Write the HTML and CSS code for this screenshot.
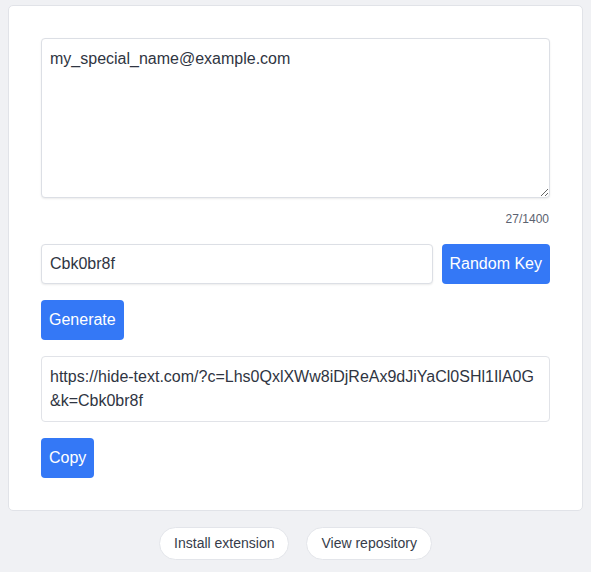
FILE: index.html
```html
<!DOCTYPE html>
<html lang="en">
<head>
<meta charset="utf-8">
<title>Hide text</title>
<link rel="stylesheet" href="styles.css">
</head>
<body>
<main class="page">
  <section class="card">
    <textarea class="message" rows="6">my_special_name@example.com</textarea>
    <div class="counter">27/1400</div>
    <div class="key-row">
      <input class="field key-input" type="text" value="Cbk0br8f">
      <button class="btn">Random Key</button>
    </div>
    <div class="actions">
      <button class="btn">Generate</button>
    </div>
    <div class="output">https://hide-text.com/?c=Lhs0QxlXWw8iDjReAx9dJiYaCl0SHl1IlA0G&amp;k=Cbk0br8f</div>
    <div class="actions">
      <button class="btn">Copy</button>
    </div>
  </section>
  <nav class="links">
    <a class="pill" href="#">Install extension</a>
    <a class="pill" href="#">View repository</a>
  </nav>
</main>
</body>
</html>
```
FILE: styles.css
```css
* { box-sizing: border-box; }
html, body {
  margin: 0;
  background: #f0f1f4;
}
body {
  font-family: "Liberation Sans", Arial, sans-serif;
  color: #2f3542;
  padding: 5px 8px 0;
}
.page {
  display: flex;
  flex-direction: column;
}
.card {
  background: #ffffff;
  border: 1px solid #e1e3e8;
  border-radius: 5px;
  padding: 32px;
  display: flex;
  flex-direction: column;
}
.message {
  display: block;
  width: 100%;
  height: 160px;
  margin: 0;
  padding: 8px;
  font-family: inherit;
  font-size: 16px;
  line-height: 24px;
  color: #2f3542;
  border: 1px solid #dcdfe5;
  border-radius: 4px;
  box-shadow: 0 1px 2px rgba(0, 0, 0, 0.08);
  resize: vertical;
  outline: none;
}
.counter {
  margin-top: 12px;
  text-align: right;
  font-size: 12px;
  line-height: 18px;
  color: #5c6270;
  padding-right: 1px;
}
.key-row {
  margin-top: 16px;
  display: flex;
  gap: 9px;
}
.field {
  flex: 1;
  min-width: 0;
  height: 40px;
  margin: 0;
  padding: 7px 8px;
  font-family: inherit;
  font-size: 16px;
  line-height: 24px;
  color: #2f3542;
  border: 1px solid #dcdfe5;
  border-radius: 4px;
  box-shadow: 0 1px 2px rgba(0, 0, 0, 0.08);
  outline: none;
}
.btn {
  height: 40px;
  padding: 0 8px;
  margin: 0;
  border: none;
  border-radius: 4px;
  background: #3478f6;
  color: #ffffff;
  font-family: inherit;
  font-size: 16px;
  line-height: 24px;
  cursor: pointer;
}
.actions {
  margin-top: 16px;
  display: flex;
}
.output {
  margin-top: 16px;
  padding: 8px;
  border: 1px solid #e1e3e8;
  border-radius: 4px;
  font-size: 16px;
  line-height: 24px;
  word-break: break-all;
  color: #2f3542;
}
.links {
  margin-top: 16px;
  display: flex;
  justify-content: center;
  gap: 17px;
}
.pill {
  display: inline-block;
  padding: 6px 14px;
  background: #ffffff;
  border: 1px solid #e3e5ea;
  border-radius: 999px;
  font-size: 14px;
  line-height: 19px;
  color: #363c4a;
  text-decoration: none;
}
```
